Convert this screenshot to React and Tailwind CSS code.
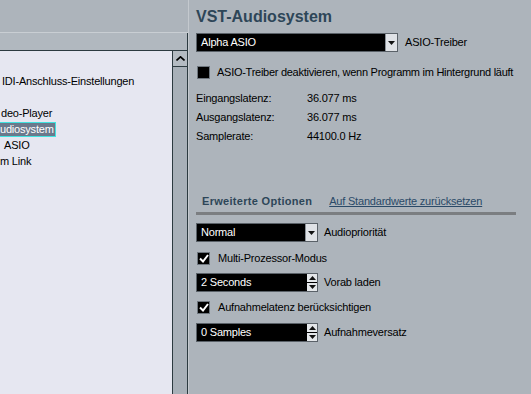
const Arrow = ({ up }) => (
  <svg width="7" height="4" viewBox="0 0 7 4" className="block">
    {up ? <path d="M0 4 L3.5 0 L7 4 Z" fill="#111" /> : <path d="M0 0 L7 0 L3.5 4 Z" fill="#111" />}
  </svg>
);

const Dropdown = ({ value, width }) => (
  <div className={`${width} h-[19px] bg-black border border-[#5a6168] flex items-center justify-between`}>
    <span className="text-white pl-[4px] leading-none">{value}</span>
    <div className="w-[12px] h-[17px] bg-[#dfe2e6] border-l border-[#8b9299] flex items-center justify-center">
      <Arrow />
    </div>
  </div>
);

const Spinner = ({ value }) => (
  <div className="w-[122px] h-[19px] bg-black border border-[#5a6168] flex items-center justify-between">
    <span className="text-white pl-[4px] leading-none">{value}</span>
    <div className="w-[10px] h-[17px] flex flex-col gap-[1px] bg-black">
      <div className="flex-1 bg-[#e4e7ea] flex items-center justify-center">
        <Arrow up />
      </div>
      <div className="flex-1 bg-[#e4e7ea] flex items-center justify-center">
        <Arrow />
      </div>
    </div>
  </div>
);

const Check = ({ checked }) => (
  <div className="w-[13px] h-[13px] bg-black border border-[#6e767e] flex items-center justify-center">
    {checked && (
      <svg width="10" height="9" viewBox="0 0 10 9">
        <path d="M1 4.5 L4 7.5 L9 1" stroke="#fff" strokeWidth="2" fill="none" />
      </svg>
    )}
  </div>
);

const rows = [
  { text: '', x: 'pl-0' },
  { text: 'IDI-Anschluss-Einstellungen', x: 'pl-[2px]' },
  { text: '', x: 'pl-0' },
  { text: 'deo-Player', x: 'pl-[1px]' },
  { text: 'udiosystem', x: 'pl-0', selected: true },
  { text: 'ASIO', x: 'pl-[4px]' },
  { text: 'm Link', x: 'pl-0' },
];

export default function App() {
  return (
    <div className="w-[531px] h-[394px] flex bg-[#adb4bb] overflow-hidden text-[11px] tracking-[-0.2px] text-black font-['Liberation_Sans',Arial,sans-serif]">
      <div className="w-[188px] flex flex-col">
        <div className="h-[33px] border-b border-[#c9ced3]"></div>
        <div className="h-[18px] bg-[#b1b8bf] border-b border-r border-[#2c3a40]"></div>
        <div className="flex-1 flex">
          <div className="flex-1 bg-[#e6e7f1] border-r border-[#2c3a40] pt-[6px]">
            {rows.map((r, i) => (
              <div key={i} className={`h-[16px] leading-[16px] ${r.x}`}>
                {r.selected ? (
                  <span className="inline-block h-[15px] pr-[1px] leading-[13px] bg-[#6b798c] border border-[#3fe3e0] text-white border-l-0">
                    {r.text}
                  </span>
                ) : (
                  r.text
                )}
              </div>
            ))}
          </div>
          <div className="w-[15px] bg-[#a8b0b8] border-r border-[#2c3a40] flex flex-col">
            <div className="h-[16px] bg-[#b4bbc2] border-b border-[#2c3a40] flex items-center justify-center">
              <svg width="9" height="5" viewBox="0 0 9 5">
                <path d="M0.5 4.5 L4.5 0.8 L8.5 4.5" stroke="#000" strokeWidth="1.6" fill="none" />
              </svg>
            </div>
          </div>
        </div>
      </div>

      <div className="flex-1 pl-[7px] border-l border-[#c4c9ce] flex flex-col">
        <div className="pt-[8px] text-[16px] leading-[18px] tracking-normal font-bold text-[#2d4658]">VST-Audiosystem</div>

        <div className="mt-[7px] flex items-center gap-[7px]">
          <Dropdown value="Alpha ASIO" width="w-[202px]" />
          <span>ASIO-Treiber</span>
        </div>

        <div className="mt-[13px] h-[14px] flex items-center gap-[7px] pl-[1px]">
          <Check />
          <span className="tracking-[-0.27px] whitespace-nowrap">ASIO-Treiber deaktivieren, wenn Programm im Hintergrund läuft</span>
        </div>

        <div className="mt-[10px]">
          {[
            ['Eingangslatenz:', '36.077 ms'],
            ['Ausgangslatenz:', '36.077 ms'],
            ['Samplerate:', '44100.0 Hz'],
          ].map(([k, v]) => (
            <div key={k} className="h-[19px] leading-[19px] flex">
              <span className="w-[111px]">{k}</span>
              <span>{v}</span>
            </div>
          ))}
        </div>

        <div className="mt-[46px] h-[19px] leading-[19px] flex gap-[17px] pl-[6px]">
          <span className="font-bold tracking-[0.3px] text-[#2d4658]">Erweiterte Optionen</span>
          <span className="underline text-[#2a4a68]">Auf Standardwerte zurücksetzen</span>
        </div>
        <div className="mt-[1px] h-[3px] w-[320px] bg-[#7b7e81]"></div>

        <div className="mt-[8px] flex items-center gap-[6px]">
          <Dropdown value="Normal" width="w-[122px]" />
          <span>Audiopriorität</span>
        </div>

        <div className="mt-[7px] h-[19px] flex items-center gap-[8px] pl-[1px]">
          <Check checked />
          <span>Multi-Prozessor-Modus</span>
        </div>

        <div className="mt-[5px] flex items-center gap-[6px]">
          <Spinner value="2 Seconds" />
          <span>Vorab laden</span>
        </div>

        <div className="mt-[6px] h-[19px] flex items-center gap-[8px] pl-[1px]">
          <Check checked />
          <span>Aufnahmelatenz berücksichtigen</span>
        </div>

        <div className="mt-[6px] flex items-center gap-[6px]">
          <Spinner value="0 Samples" />
          <span>Aufnahmeversatz</span>
        </div>
      </div>
    </div>
  );
}
